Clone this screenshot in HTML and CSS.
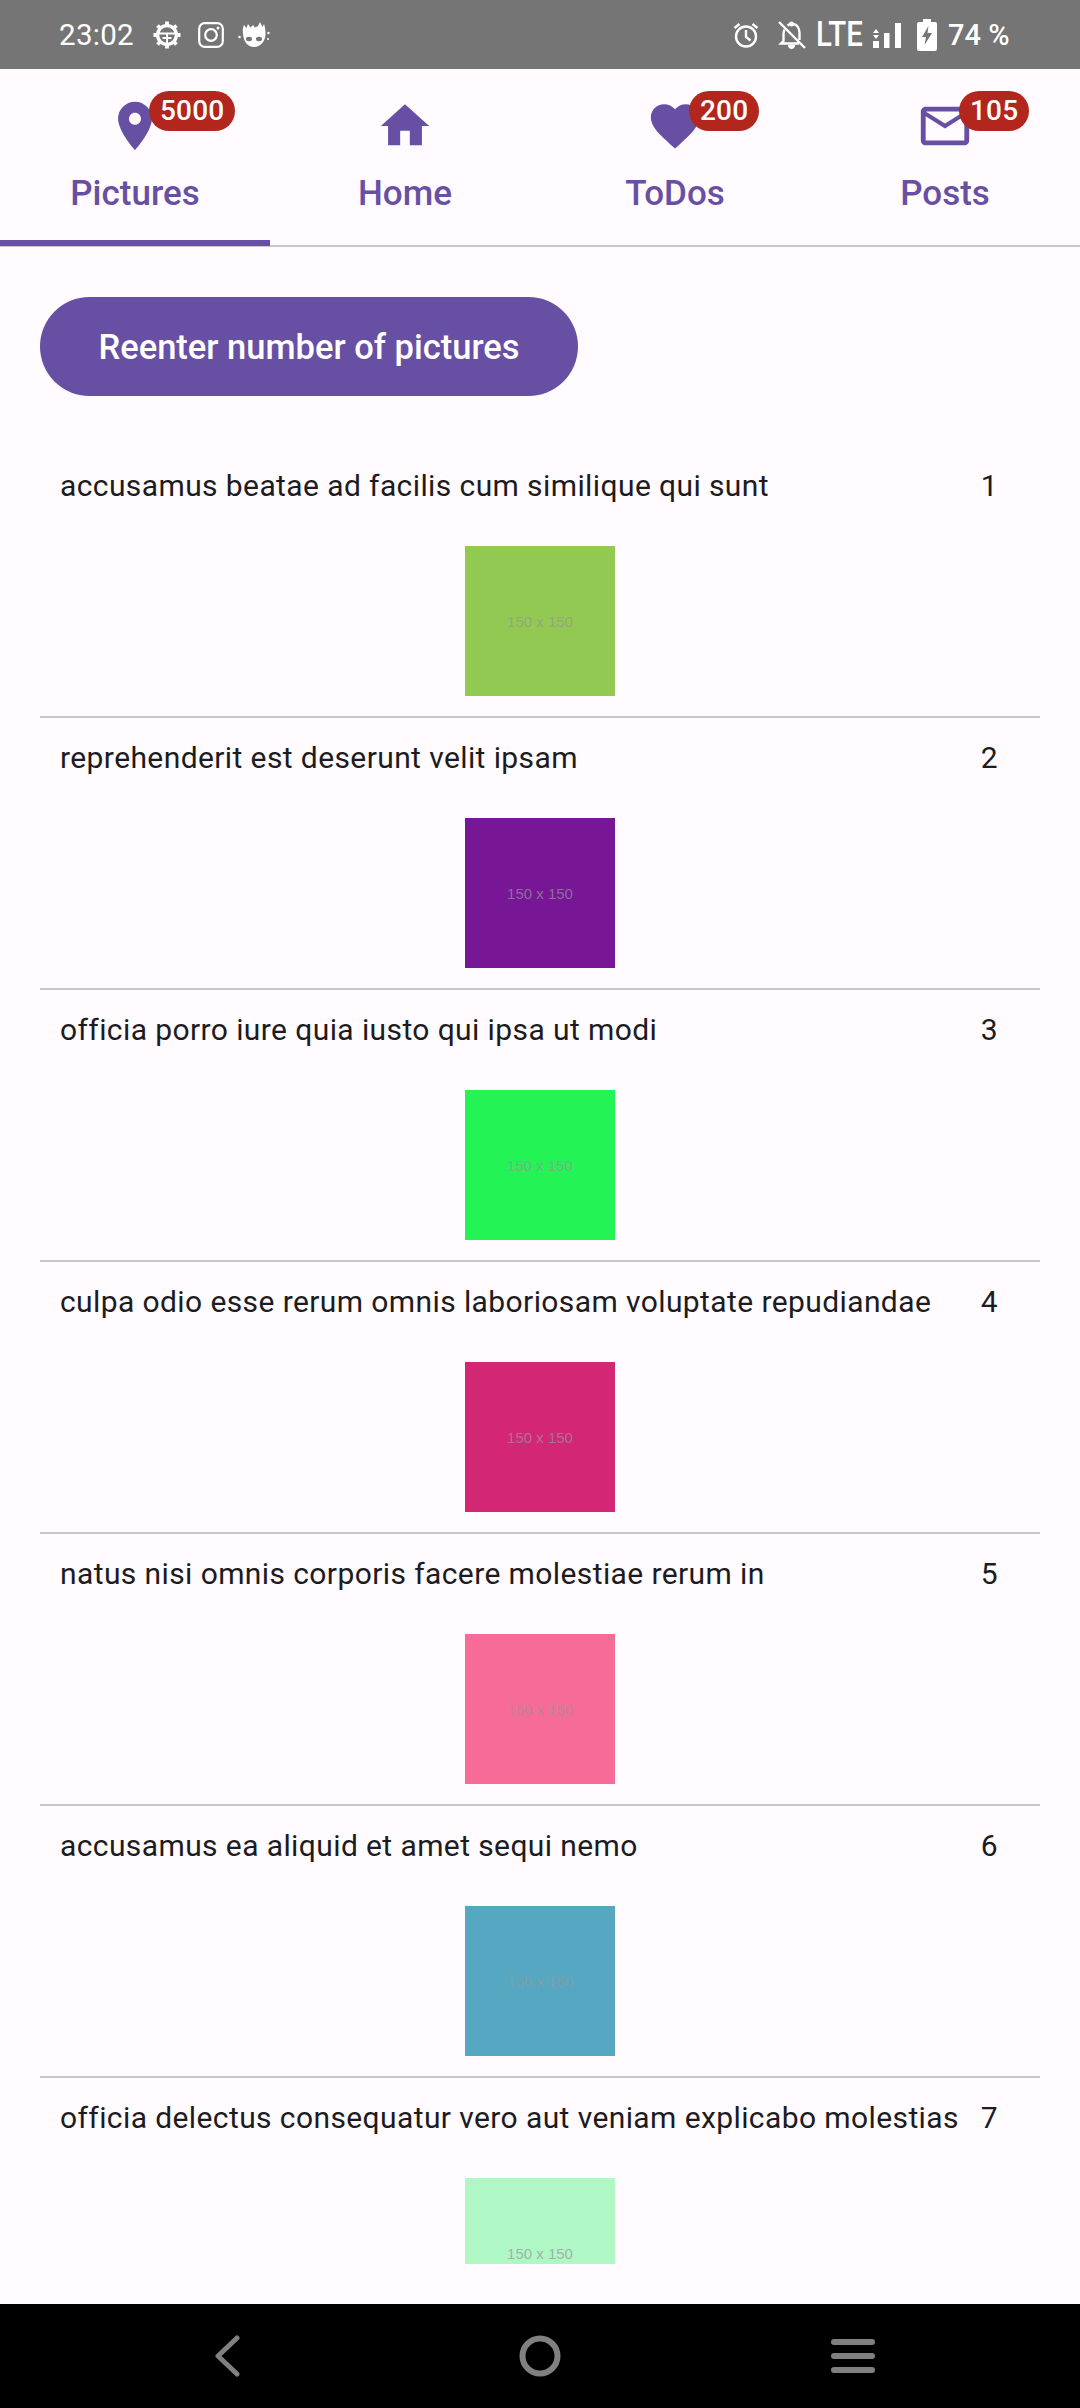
FILE: index.html
```html
<!DOCTYPE html>
<html lang="en">
<head>
<meta charset="utf-8">
<title>Pictures</title>
<link rel="stylesheet" href="styles.css">
</head>
<body>
<div class="app">
  <header class="status">
    <div class="status-left">
      <span class="time">23:02</span>
      <svg class="si gear" viewBox="0 0 28 28"><g fill="none" stroke="#fff"><circle cx="14" cy="14" r="9.400" stroke-width="3.400"/><path d="M5 12.500h18M14 13v9M9.500 17h9" stroke-width="2"/><path d="M14 .5v4M14 23.500v4M.5 14h4M23.500 14h4M4.500 4.500l3 3M20.500 20.500l3 3M23.500 4.500l-3 3M7.500 20.500l-3 3" stroke-width="3.800"/></g></svg>
      <svg class="si insta" viewBox="0 0 26 26"><g fill="none" stroke="#fff" stroke-width="2.200"><rect x="1.200" y="1.200" width="23.600" height="23.600" rx="5.500"/><circle cx="13" cy="13" r="5.800"/></g><circle cx="20" cy="6" r="1.500" fill="#fff"/></svg>
      <svg class="si groot" viewBox="0 0 32 26"><path fill="#fff" d="M5 12C4.500 8 5 5 6 3l2.500 3L10 2l2.500 3.500L15 3l2 2.500L20 4l2-4 2.500 5L26 2c1 3 1.500 6 1.500 10 0 7-5 13-11.500 13C9.500 25 5.500 19 5 12z"/><ellipse cx="11" cy="17" rx="3" ry="2.200" fill="#757575"/><ellipse cx="21" cy="17" rx="3" ry="2.200" fill="#757575"/><circle cx="1.500" cy="15" r="1.300" fill="#fff"/><circle cx="30.500" cy="11" r="1.200" fill="#fff"/><circle cx="30" cy="17" r="1" fill="#fff"/></svg>
    </div>
    <div class="status-right">
      <svg class="si alarm" viewBox="0 0 26 26"><g fill="none" stroke="#fff" stroke-width="2.400"><circle cx="13" cy="14.500" r="10"/><path d="M13 8v7l4.500 3.500M1.500 6l5-4M24.500 6l-5-4"/></g></svg>
      <svg class="si belloff" viewBox="0 0 29 28"><g fill="none" stroke="#fff" stroke-width="2.400"><path d="M2 1l26 26M7.500 8.500C6.800 10 6.500 11.500 6.500 13v7L4 22.500h18M10.500 4.500C11.800 3.500 13 3 15 3c5 0 7.500 4 7.500 9v7"/></g><circle cx="14.500" cy="3" r="2.500" fill="#fff"/><path fill="#fff" d="M11 24h7c0 2.500-1.500 4-3.500 4S11 26.500 11 24z"/></svg>
      <span class="lte">LTE</span>
      <svg class="si signal" viewBox="0 0 30 28"><path fill="#fff" d="M1 12l3-4 3 4zM1 14h6l-3 4zM1 20h6v7H1zM12 12h5.500v15H12zM23 2h6v25h-6z"/></svg>
      <svg class="si battery" viewBox="0 0 20 32"><path fill="#fff" d="M6 0h8v3h4a2 2 0 0 1 2 2v25a2 2 0 0 1-2 2H2a2 2 0 0 1-2-2V5a2 2 0 0 1 2-2h4z"/><path fill="#757575" d="M11.500 7L5 18h4l-1.500 8L15 14h-4.500z"/></svg>
      <span class="pct">74 %</span>
    </div>
  </header>

  <nav class="tabs">
    <div class="tab tab-active">
      <span class="tab-icon">
        <svg viewBox="0 0 24 24"><path d="M12 2C8.130 2 5 5.130 5 9c0 5.250 7 13 7 13s7-7.750 7-13c0-3.870-3.130-7-7-7zm0 9.500c-1.380 0-2.500-1.120-2.500-2.500s1.120-2.500 2.500-2.500 2.500 1.120 2.500 2.500-1.120 2.500-2.500 2.500z"/></svg>
        <span class="badge">5000</span>
      </span>
      <span class="tab-label">Pictures</span>
    </div>
    <div class="tab">
      <span class="tab-icon">
        <svg viewBox="0 0 24 24"><path d="M10 20v-6h4v6h5v-8h3L12 3 2 12h3v8z"/></svg>
      </span>
      <span class="tab-label">Home</span>
    </div>
    <div class="tab">
      <span class="tab-icon">
        <svg viewBox="0 0 24 24"><path d="M12 21.350l-1.450-1.320C5.400 15.360 2 12.280 2 8.500 2 5.420 4.420 3 7.500 3c1.740 0 3.410.810 4.500 2.090C13.090 3.810 14.760 3 16.500 3 19.580 3 22 5.420 22 8.500c0 3.780-3.400 6.860-8.550 11.540L12 21.350z"/></svg>
        <span class="badge">200</span>
      </span>
      <span class="tab-label">ToDos</span>
    </div>
    <div class="tab">
      <span class="tab-icon">
        <svg viewBox="0 0 24 24"><path d="M20 4H4c-1.100 0-1.990.900-1.990 2L2 18c0 1.100.900 2 2 2h16c1.100 0 2-.900 2-2V6c0-1.100-.900-2-2-2zm0 14H4V8l8 5 8-5v10zm-8-7L4 6h16l-8 5z"/></svg>
        <span class="badge">105</span>
      </span>
      <span class="tab-label">Posts</span>
    </div>
  </nav>

  <main class="content">
    <button class="reenter" type="button">Reenter number of pictures</button>
    <div class="list">
      <article class="row">
        <div class="row-head"><span class="row-title">accusamus beatae ad facilis cum similique qui sunt</span><span class="row-num">1</span></div>
        <div class="thumb c1">150 x 150</div>
      </article>
      <article class="row">
        <div class="row-head"><span class="row-title">reprehenderit est deserunt velit ipsam</span><span class="row-num">2</span></div>
        <div class="thumb c2">150 x 150</div>
      </article>
      <article class="row">
        <div class="row-head"><span class="row-title">officia porro iure quia iusto qui ipsa ut modi</span><span class="row-num">3</span></div>
        <div class="thumb c3">150 x 150</div>
      </article>
      <article class="row">
        <div class="row-head"><span class="row-title">culpa odio esse rerum omnis laboriosam voluptate repudiandae</span><span class="row-num">4</span></div>
        <div class="thumb c4">150 x 150</div>
      </article>
      <article class="row">
        <div class="row-head"><span class="row-title">natus nisi omnis corporis facere molestiae rerum in</span><span class="row-num">5</span></div>
        <div class="thumb c5">150 x 150</div>
      </article>
      <article class="row">
        <div class="row-head"><span class="row-title">accusamus ea aliquid et amet sequi nemo</span><span class="row-num">6</span></div>
        <div class="thumb c6">150 x 150</div>
      </article>
      <article class="row">
        <div class="row-head"><span class="row-title">officia delectus consequatur vero aut veniam explicabo molestias</span><span class="row-num">7</span></div>
        <div class="thumb c7">150 x 150</div>
      </article>
    </div>
  </main>

  <footer class="navbar">
    <svg class="nav-back" viewBox="0 0 28 42"><path d="M24 3L5 21l19 18" fill="none" stroke="#808080" stroke-width="5" stroke-linecap="round" stroke-linejoin="round"/></svg>
    <svg class="nav-home" viewBox="0 0 42 42"><circle cx="21" cy="21" r="17.500" fill="none" stroke="#808080" stroke-width="6"/></svg>
    <svg class="nav-menu" viewBox="0 0 44 34"><path d="M3 3h38M3 17h38M3 31h38" fill="none" stroke="#808080" stroke-width="6" stroke-linecap="round"/></svg>
  </footer>
</div>
</body>
</html>
```

FILE: styles.css
```css
* { box-sizing: border-box; }
html, body { margin: 0; padding: 0; }
body { font-family: Roboto, "Liberation Sans", sans-serif; background: #fffbfe; }

.app { width: 1080px; height: 2408px; display: flex; flex-direction: column; overflow: hidden; }

.status {
  height: 69px; flex: none; background: #757575; color: #fff;
  display: flex; justify-content: space-between; align-items: center;
  padding: 0 72px 0 59px;
}
.status-left, .status-right { display: flex; align-items: center; }
.si { display: block; flex: none; }
.time { font-size: 29.5px; width: 94px; letter-spacing: 0.3px; }
.gear { width: 28px; height: 28px; margin-right: 17px; }
.insta { width: 26px; height: 26px; margin-right: 14px; }
.groot { width: 32px; height: 26px; }
.alarm { width: 26px; height: 26px; margin-right: 18px; }
.belloff { width: 29px; height: 28px; margin-right: 10px; }
.lte { font-size: 35px; font-weight: 500; width: 56px; line-height: 1; transform: scaleX(.84); transform-origin: left center; }
.signal { width: 30px; height: 28px; margin-right: 15px; }
.battery { width: 20px; height: 32px; margin-right: 11px; }
.pct { font-size: 29px; font-weight: 500; width: 60px; white-space: nowrap; }

.tabs { height: 178px; flex: none; display: flex; border-bottom: 2px solid #c9c6cc; }
.tab {
  width: 270px; height: 177px; display: flex; flex-direction: column; align-items: center;
  padding-top: 28px; color: #6750a4;
}
.tab-active { border-bottom: 6px solid #6750a4; }
.tab-icon { position: relative; width: 58px; height: 58px; display: block; }
.tab-icon svg { display: block; width: 58px; height: 58px; fill: #6750a4; }
.badge {
  position: absolute; left: 43px; top: -6px; height: 40px; padding: 0 11px; border-radius: 20px;
  background: #b3261e; color: #fff; font-size: 28px; font-weight: 500; line-height: 40px; letter-spacing: 0.2px;
}
.tab-label { font-size: 35px; font-weight: 500; line-height: 44px; margin-top: 17px; }

.content { flex: 1; min-height: 0; display: flex; flex-direction: column; align-items: flex-start; padding: 50px 40px 40px; }
.reenter {
  flex: none; width: 538px; height: 99px; border: 0; border-radius: 50px; background: #6750a4; color: #fff;
  font-family: inherit; font-size: 34.5px; font-weight: 500; padding: 0;
}
.list { flex: 1; min-height: 0; width: 1000px; margin-top: 50px; overflow: hidden; }
.row { height: 272px; border-bottom: 2px solid #c9c6cc; }
.row-head {
  display: flex; justify-content: space-between; padding: 20px 42px 40px 20px;
  font-size: 30px; line-height: 40px; color: #1c1b1f; letter-spacing: 0.4px;
}
.thumb {
  width: 150px; height: 150px; margin: 0 auto; display: flex; align-items: center; justify-content: center;
  font-family: "Liberation Sans", Arial, sans-serif; font-size: 15px; color: rgba(150, 150, 150, .7);
}
.c1 { background: #92c952; }
.c2 { background: #771796; }
.c3 { background: #24f355; }
.c4 { background: #d32776; }
.c5 { background: #f66b97; }
.c6 { background: #56a8c2; }
.c7 { background: #b0f7c6; }

.navbar { height: 104px; flex: none; background: #000; display: flex; align-items: center; }
.nav-back { width: 28px; height: 42px; margin-left: 213px; }
.nav-home { width: 42px; height: 42px; margin-left: 278px; }
.nav-menu { width: 44px; height: 34px; margin-left: 270px; }
```
